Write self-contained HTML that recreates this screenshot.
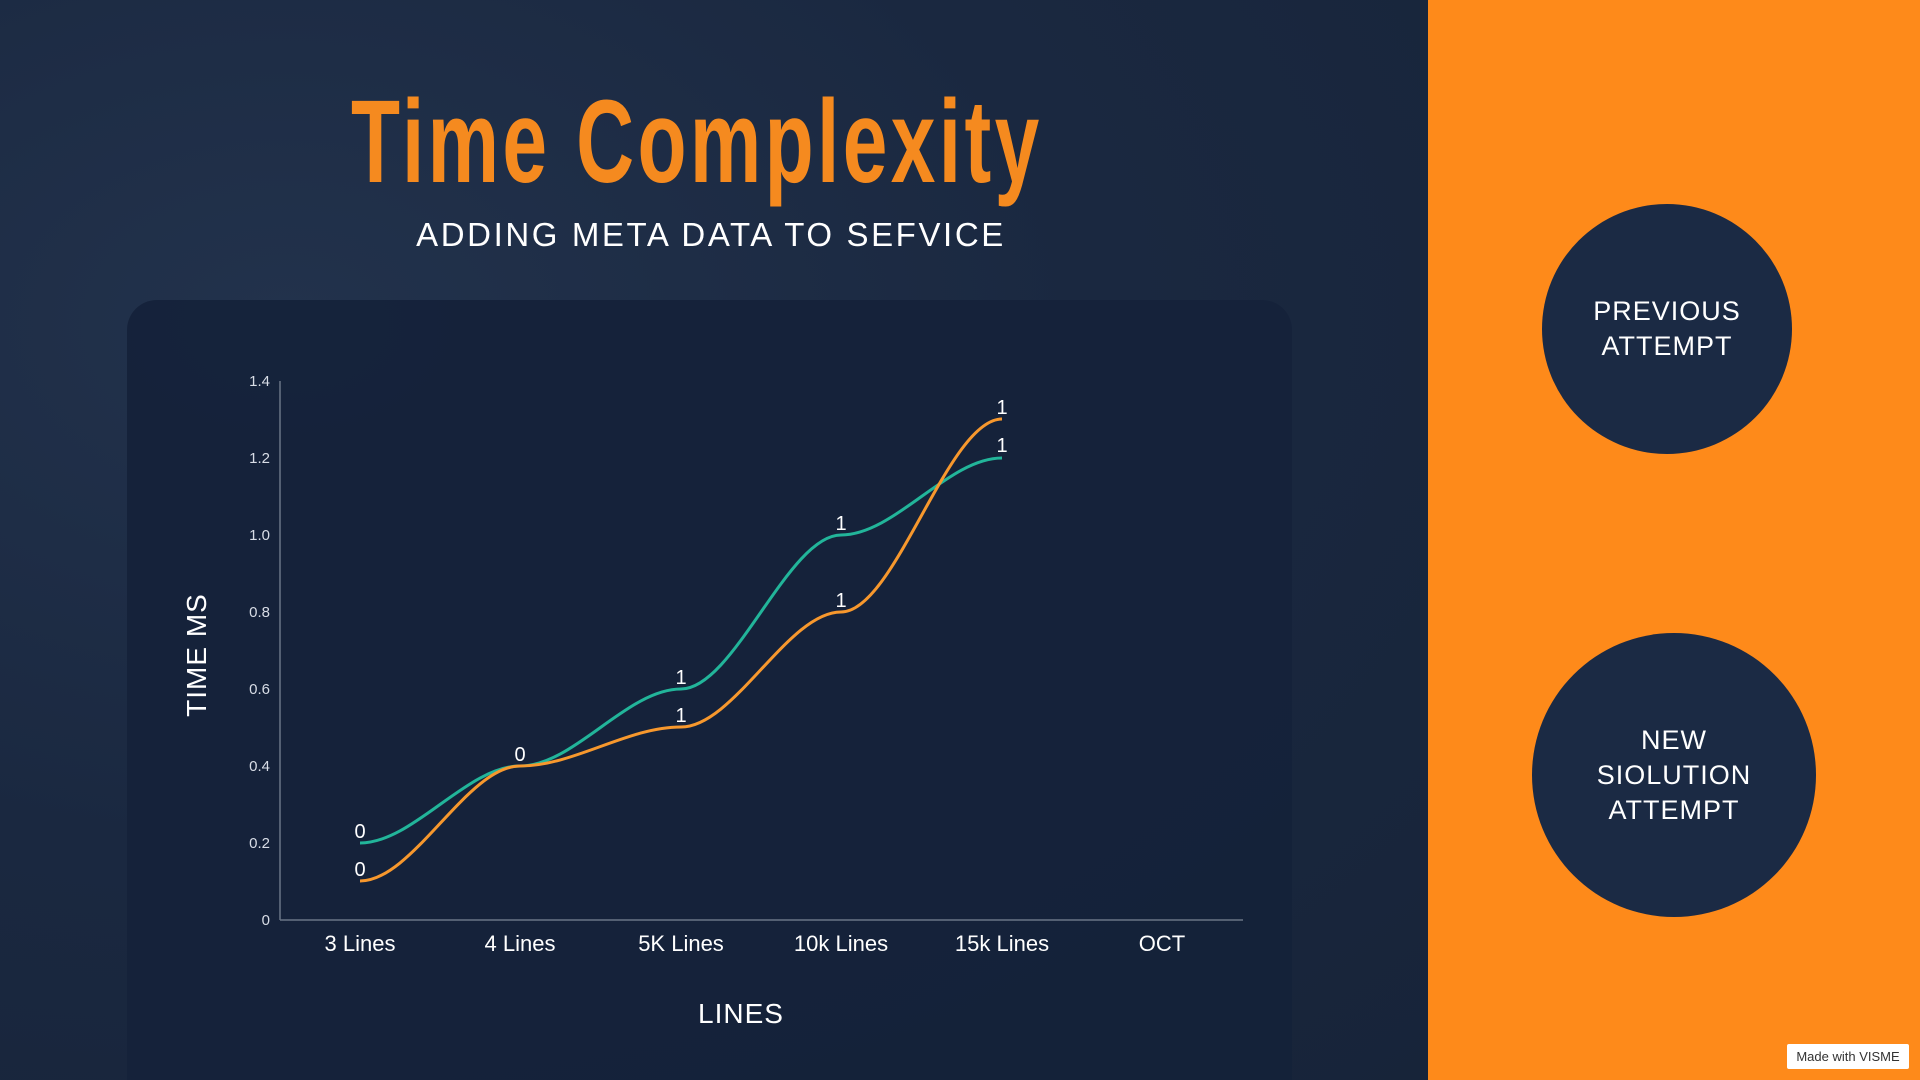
<!DOCTYPE html>
<html><head><meta charset="utf-8"><style>
html,body{margin:0;padding:0;width:1920px;height:1080px;overflow:hidden}
body{position:relative;background:#1a2840;font-family:"Liberation Sans",sans-serif}
.bg{position:absolute;left:0;top:0;width:1428px;height:1080px;background:radial-gradient(ellipse at 20% 30%,#22324c 0%,#1a2840 50%,#172439 100%)}
.right{position:absolute;left:1428px;top:0;width:492px;height:1080px;background:#fe8a1a}
.title{position:absolute;left:351px;top:72px;height:140px;color:#f58a1f;font-size:118px;line-height:140px;font-weight:bold;white-space:nowrap;transform-origin:left top;transform:scaleX(0.68);letter-spacing:5px}
.sub{position:absolute;left:408px;top:216px;width:606px;text-align:center;color:#fff;font-size:33px;letter-spacing:2.6px;white-space:nowrap}
.panel{position:absolute;left:127px;top:300px;width:1165px;height:780px;background:#152239;border-radius:30px 30px 0 0;opacity:.92}
.circ{position:absolute;border-radius:50%;background:#1b2a44;color:#fff;display:flex;align-items:center;justify-content:center;text-align:center;font-size:27px;line-height:35px;letter-spacing:1px}
.badge{position:absolute;left:1787px;top:1044px;width:122px;height:25px;background:#fff;color:#333;font-size:13px;line-height:25px;text-align:center;border-radius:2px}
</style></head><body>
<div class="bg"></div>
<div class="right"></div>
<div class="title">Time Complexity</div>
<div class="sub">ADDING META DATA TO SEFVICE</div>
<div class="panel"></div>
<svg style="position:absolute;left:0;top:0" width="1428" height="1080">
<g font-family="Liberation Sans" fill="#fff">
<g font-size="15" text-anchor="end" fill="#d8dde6">
<text x="270" y="925">0</text><text x="270" y="848">0.2</text><text x="270" y="771">0.4</text><text x="270" y="694">0.6</text><text x="270" y="617">0.8</text><text x="270" y="540">1.0</text><text x="270" y="463">1.2</text><text x="270" y="386">1.4</text>
</g>
<line x1="280" y1="381" x2="280" y2="920" stroke="#6a7486" stroke-width="1.5"/>
<line x1="280" y1="920" x2="1243" y2="920" stroke="#6a7486" stroke-width="1.5"/>
<g font-size="22" text-anchor="middle">
<text x="360" y="951">3 Lines</text><text x="520" y="951">4 Lines</text><text x="681" y="951">5K Lines</text><text x="841" y="951">10k Lines</text><text x="1002" y="951">15k Lines</text><text x="1162" y="951">OCT</text>
</g>
<text x="741" y="1023" font-size="28" text-anchor="middle" letter-spacing="1">LINES</text>
<text transform="translate(206,655) rotate(-90)" font-size="28" text-anchor="middle" letter-spacing="1">TIME MS</text>
<path d="M360 843 C413 843 467 766 520 766 C574 766 627 689 681 689 C734 689 788 535 841 535 C895 535 948 458 1002 458" fill="none" stroke="#22b59a" stroke-width="3"/>
<path d="M360 881 C413 881 467 766 520 766 C574 766 627 727 681 727 C734 727 788 612 841 612 C895 612 948 419 1002 419" fill="none" stroke="#f7982d" stroke-width="3"/>
<g font-size="20" text-anchor="middle">
<text x="360" y="838">0</text><text x="360" y="876">0</text><text x="520" y="761">0</text>
<text x="681" y="684">1</text><text x="681" y="722">1</text><text x="841" y="530">1</text><text x="841" y="607">1</text>
<text x="1002" y="452">1</text><text x="1002" y="414">1</text>
</g>
</g>
</svg>
<div class="circ" style="left:1542px;top:204px;width:250px;height:250px">PREVIOUS<br>ATTEMPT</div>
<div class="circ" style="left:1532px;top:633px;width:284px;height:284px">NEW<br>SIOLUTION<br>ATTEMPT</div>
<div class="badge">Made with VISME</div>
</body></html>
